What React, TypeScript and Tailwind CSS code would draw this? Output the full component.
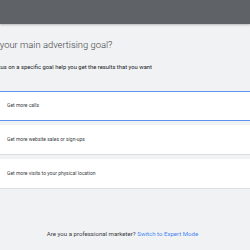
const goals = [
  { label: "Get more calls", selected: true },
  { label: "Get more website sales or sign-ups", selected: false },
  { label: "Get more visits to your physical location", selected: false },
];

export default function App() {
  return (
    <div className="h-[250px] w-[250px] overflow-hidden bg-[#f0f2f4] font-['Roboto',sans-serif] text-[#3c4043]">
      <div className="h-[24px] bg-[#5f6368] shadow-[0_1px_2px_rgba(0,0,0,0.25)]" />

      <h1 className="mt-[14px] -ml-[30px] whitespace-nowrap text-[9.4px] font-light leading-[14px] text-[#3c4043]">
        What’s your main advertising goal?
      </h1>
      <p className="mt-[12px] -ml-[9px] whitespace-nowrap text-[5.85px] leading-[7px] text-[#202124]">
        Focus on a specific goal help you get the results that you want
      </p>

      <div className="mt-[20px] flex flex-col gap-[4px]">
        {goals.map((goal) => (
          <div
            key={goal.label}
            className={`flex h-[30px] items-center bg-white pl-[7px] text-[5px] text-[#3c4043] ${
              goal.selected
                ? "border-y border-[#5b93ee]"
                : "border-b border-[#dcdfe2]"
            }`}
          >
            {goal.label}
          </div>
        ))}
      </div>

      <p className="mt-[40px] pr-[5px] text-center text-[6.1px] text-[#3c4043]">
        Are you a professional marketer?{" "}
        <span className="text-[#4a86f0]">Switch to Expert Mode</span>
      </p>
    </div>
  );
}
